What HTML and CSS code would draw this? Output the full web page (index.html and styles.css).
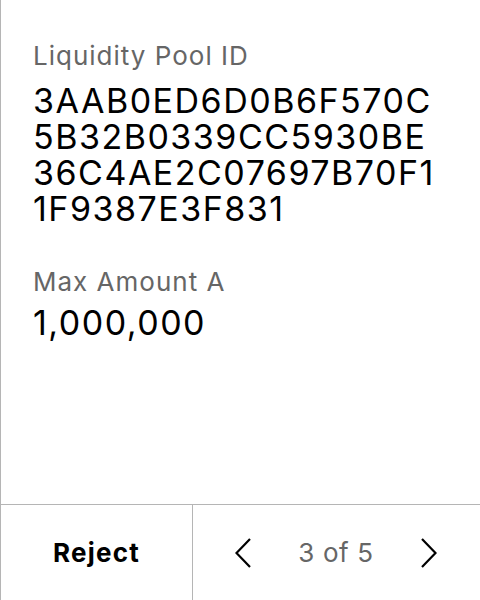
FILE: index.html
```html
<!DOCTYPE html>
<html>
<head>
<meta charset="utf-8">
<link rel="stylesheet" href="styles.css">
</head>
<body>
<div class="screen">
  <main class="content">
    <div class="field">
      <div class="label">Liquidity Pool ID</div>
      <div class="value value-multi">3AAB0ED6D0B6F570C<br>5B32B0339CC5930BE<br>36C4AE2C07697B70F1<br>1F9387E3F831</div>
    </div>
    <div class="field">
      <div class="label">Max Amount A</div>
      <div class="value">1,000,000</div>
    </div>
  </main>
  <footer class="footer">
    <div class="reject">Reject</div>
    <div class="pager">
      <svg class="chev" width="16" height="30" viewBox="0 0 16 30"><path d="M15 1 L1.5 15 L15 29" fill="none" stroke="#000" stroke-width="2.2"/></svg>
      <span class="count">3 of 5</span>
      <svg class="chev" width="16" height="30" viewBox="0 0 16 30"><path d="M1 1 L14.5 15 L1 29" fill="none" stroke="#000" stroke-width="2.2"/></svg>
    </div>
  </footer>
</div>
</body>
</html>
```
FILE: styles.css
```css
html, body {
  margin: 0;
  padding: 0;
  background: #fff;
}
.screen {
  width: 479px;
  height: 600px;
  border-left: 1px solid #b5b5b5;
  display: flex;
  flex-direction: column;
  font-family: Inter, "Noto Sans", sans-serif;
  color: #000;
}
.content {
  flex: 1;
  padding: 40px 0 0 32px;
  display: flex;
  flex-direction: column;
  gap: 39px;
}
.label {
  font-size: 26px;
  line-height: 32px;
  letter-spacing: 1px;
  color: #666;
}
.value {
  font-size: 34px;
  line-height: 36px;
  letter-spacing: 1.5px;
  margin-top: 7px;
}
.value-multi {
  margin-top: 11px;
}
.footer {
  height: 95px;
  border-top: 1px solid #b5b5b5;
  display: flex;
}
.reject {
  width: 191px;
  border-right: 1px solid #b5b5b5;
  display: flex;
  align-items: center;
  justify-content: center;
  font-size: 26px;
  font-weight: 700;
  letter-spacing: 1.2px;
}
.pager {
  flex: 1;
  display: flex;
  align-items: center;
  justify-content: space-between;
  padding: 0 43px 0 42px;
}
.count {
  font-size: 26px;
  letter-spacing: 0.6px;
  color: #666;
}
.chev {
  display: block;
}
```
